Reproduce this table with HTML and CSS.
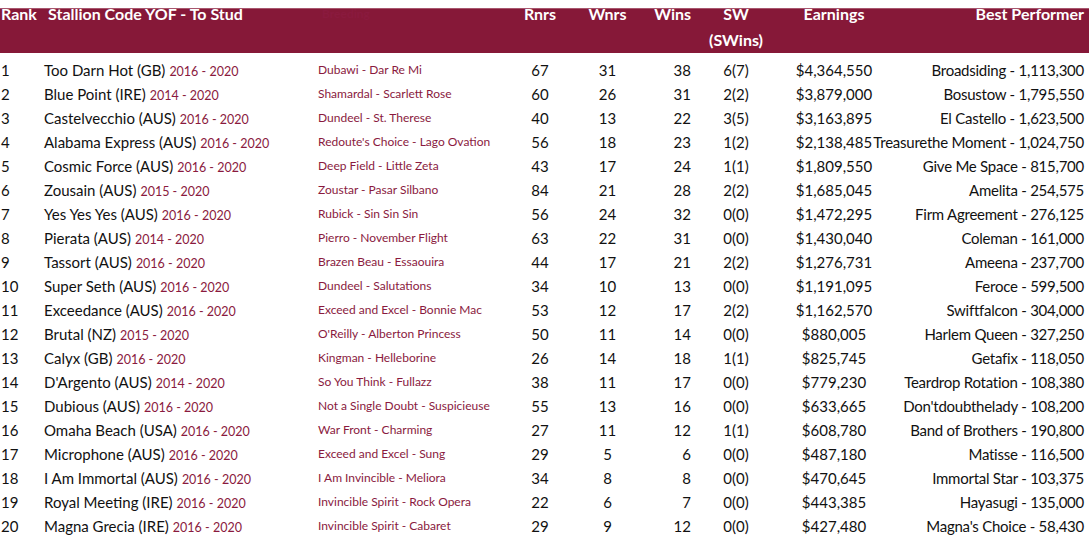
FILE: index.html
```html
<!DOCTYPE html>
<html lang="en">
<head>
<meta charset="utf-8">
<title>Stallion Table</title>
<link rel="stylesheet" href="styles.css">
</head>
<body>
<div class="table">
  <div class="row head">
    <div class="c rank">Rank</div>
    <div class="c stallion pad">Stallion Code YOF - To Stud</div>
    <div class="c breeding pad">Breeding</div>
    <div class="c ctr">Rnrs</div>
    <div class="c ctr">Wnrs</div>
    <div class="c end">Wins</div>
    <div class="c ctr col">SW<br>(SWins)</div>
    <div class="c ctr">Earnings</div>
    <div class="c end">Best Performer</div>
  </div>
  <div class="body">
    <div class="row"><div class="c rank">1</div><div class="c stallion">Too Darn Hot (GB) <span class="yof">2016 - 2020</span></div><div class="c breeding">Dubawi - Dar Re Mi</div><div class="c ctr">67</div><div class="c ctr">31</div><div class="c end">38</div><div class="c ctr">6(7)</div><div class="c ctr">$4,364,550</div><div class="c end best">Broadsiding - 1,113,300</div></div>
    <div class="row"><div class="c rank">2</div><div class="c stallion">Blue Point (IRE) <span class="yof">2014 - 2020</span></div><div class="c breeding">Shamardal - Scarlett Rose</div><div class="c ctr">60</div><div class="c ctr">26</div><div class="c end">31</div><div class="c ctr">2(2)</div><div class="c ctr">$3,879,000</div><div class="c end best">Bosustow - 1,795,550</div></div>
    <div class="row"><div class="c rank">3</div><div class="c stallion">Castelvecchio (AUS) <span class="yof">2016 - 2020</span></div><div class="c breeding">Dundeel - St. Therese</div><div class="c ctr">40</div><div class="c ctr">13</div><div class="c end">22</div><div class="c ctr">3(5)</div><div class="c ctr">$3,163,895</div><div class="c end best">El Castello - 1,623,500</div></div>
    <div class="row"><div class="c rank">4</div><div class="c stallion">Alabama Express (AUS) <span class="yof">2016 - 2020</span></div><div class="c breeding">Redoute's Choice - Lago Ovation</div><div class="c ctr">56</div><div class="c ctr">18</div><div class="c end">23</div><div class="c ctr">1(2)</div><div class="c ctr">$2,138,485</div><div class="c end best">Treasurethe Moment - 1,024,750</div></div>
    <div class="row"><div class="c rank">5</div><div class="c stallion">Cosmic Force (AUS) <span class="yof">2016 - 2020</span></div><div class="c breeding">Deep Field - Little Zeta</div><div class="c ctr">43</div><div class="c ctr">17</div><div class="c end">24</div><div class="c ctr">1(1)</div><div class="c ctr">$1,809,550</div><div class="c end best">Give Me Space - 815,700</div></div>
    <div class="row"><div class="c rank">6</div><div class="c stallion">Zousain (AUS) <span class="yof">2015 - 2020</span></div><div class="c breeding">Zoustar - Pasar Silbano</div><div class="c ctr">84</div><div class="c ctr">21</div><div class="c end">28</div><div class="c ctr">2(2)</div><div class="c ctr">$1,685,045</div><div class="c end best">Amelita - 254,575</div></div>
    <div class="row"><div class="c rank">7</div><div class="c stallion">Yes Yes Yes (AUS) <span class="yof">2016 - 2020</span></div><div class="c breeding">Rubick - Sin Sin Sin</div><div class="c ctr">56</div><div class="c ctr">24</div><div class="c end">32</div><div class="c ctr">0(0)</div><div class="c ctr">$1,472,295</div><div class="c end best">Firm Agreement - 276,125</div></div>
    <div class="row"><div class="c rank">8</div><div class="c stallion">Pierata (AUS) <span class="yof">2014 - 2020</span></div><div class="c breeding">Pierro - November Flight</div><div class="c ctr">63</div><div class="c ctr">22</div><div class="c end">31</div><div class="c ctr">0(0)</div><div class="c ctr">$1,430,040</div><div class="c end best">Coleman - 161,000</div></div>
    <div class="row"><div class="c rank">9</div><div class="c stallion">Tassort (AUS) <span class="yof">2016 - 2020</span></div><div class="c breeding">Brazen Beau - Essaouira</div><div class="c ctr">44</div><div class="c ctr">17</div><div class="c end">21</div><div class="c ctr">2(2)</div><div class="c ctr">$1,276,731</div><div class="c end best">Ameena - 237,700</div></div>
    <div class="row"><div class="c rank">10</div><div class="c stallion">Super Seth (AUS) <span class="yof">2016 - 2020</span></div><div class="c breeding">Dundeel - Salutations</div><div class="c ctr">34</div><div class="c ctr">10</div><div class="c end">13</div><div class="c ctr">0(0)</div><div class="c ctr">$1,191,095</div><div class="c end best">Feroce - 599,500</div></div>
    <div class="row"><div class="c rank">11</div><div class="c stallion">Exceedance (AUS) <span class="yof">2016 - 2020</span></div><div class="c breeding">Exceed and Excel - Bonnie Mac</div><div class="c ctr">53</div><div class="c ctr">12</div><div class="c end">17</div><div class="c ctr">2(2)</div><div class="c ctr">$1,162,570</div><div class="c end best">Swiftfalcon - 304,000</div></div>
    <div class="row"><div class="c rank">12</div><div class="c stallion">Brutal (NZ) <span class="yof">2015 - 2020</span></div><div class="c breeding">O'Reilly - Alberton Princess</div><div class="c ctr">50</div><div class="c ctr">11</div><div class="c end">14</div><div class="c ctr">0(0)</div><div class="c ctr">$880,005</div><div class="c end best">Harlem Queen - 327,250</div></div>
    <div class="row"><div class="c rank">13</div><div class="c stallion">Calyx (GB) <span class="yof">2016 - 2020</span></div><div class="c breeding">Kingman - Helleborine</div><div class="c ctr">26</div><div class="c ctr">14</div><div class="c end">18</div><div class="c ctr">1(1)</div><div class="c ctr">$825,745</div><div class="c end best">Getafix - 118,050</div></div>
    <div class="row"><div class="c rank">14</div><div class="c stallion">D'Argento (AUS) <span class="yof">2014 - 2020</span></div><div class="c breeding">So You Think - Fullazz</div><div class="c ctr">38</div><div class="c ctr">11</div><div class="c end">17</div><div class="c ctr">0(0)</div><div class="c ctr">$779,230</div><div class="c end best">Teardrop Rotation - 108,380</div></div>
    <div class="row"><div class="c rank">15</div><div class="c stallion">Dubious (AUS) <span class="yof">2016 - 2020</span></div><div class="c breeding">Not a Single Doubt - Suspicieuse</div><div class="c ctr">55</div><div class="c ctr">13</div><div class="c end">16</div><div class="c ctr">0(0)</div><div class="c ctr">$633,665</div><div class="c end best">Don'tdoubthelady - 108,200</div></div>
    <div class="row"><div class="c rank">16</div><div class="c stallion">Omaha Beach (USA) <span class="yof">2016 - 2020</span></div><div class="c breeding">War Front - Charming</div><div class="c ctr">27</div><div class="c ctr">11</div><div class="c end">12</div><div class="c ctr">1(1)</div><div class="c ctr">$608,780</div><div class="c end best">Band of Brothers - 190,800</div></div>
    <div class="row"><div class="c rank">17</div><div class="c stallion">Microphone (AUS) <span class="yof">2016 - 2020</span></div><div class="c breeding">Exceed and Excel - Sung</div><div class="c ctr">29</div><div class="c ctr">5</div><div class="c end">6</div><div class="c ctr">0(0)</div><div class="c ctr">$487,180</div><div class="c end best">Matisse - 116,500</div></div>
    <div class="row"><div class="c rank">18</div><div class="c stallion">I Am Immortal (AUS) <span class="yof">2016 - 2020</span></div><div class="c breeding">I Am Invincible - Meliora</div><div class="c ctr">34</div><div class="c ctr">8</div><div class="c end">8</div><div class="c ctr">0(0)</div><div class="c ctr">$470,645</div><div class="c end best">Immortal Star - 103,375</div></div>
    <div class="row"><div class="c rank">19</div><div class="c stallion">Royal Meeting (IRE) <span class="yof">2016 - 2020</span></div><div class="c breeding">Invincible Spirit - Rock Opera</div><div class="c ctr">22</div><div class="c ctr">6</div><div class="c end">7</div><div class="c ctr">0(0)</div><div class="c ctr">$443,385</div><div class="c end best">Hayasugi - 135,000</div></div>
    <div class="row"><div class="c rank">20</div><div class="c stallion">Magna Grecia (IRE) <span class="yof">2016 - 2020</span></div><div class="c breeding">Invincible Spirit - Cabaret</div><div class="c ctr">29</div><div class="c ctr">9</div><div class="c end">12</div><div class="c ctr">0(0)</div><div class="c ctr">$427,480</div><div class="c end best">Magna's Choice - 58,430</div></div>
  </div>
</div>
</body>
</html>
```
FILE: styles.css
```css
html, body {
  margin: 0;
  padding: 0;
  background: #ffffff;
}
body {
  font-family: "Lato", "Liberation Sans", sans-serif;
  color: #111111;
}
.table {
  width: 1089px;
  padding-top: 1px;
}
.row {
  display: grid;
  grid-template-columns: 44px 274px 187px 70px 65px 51px 90px 106px 197px;
  padding-right: 5px;
  height: 24px;
  line-height: 24px;
  font-size: 15px;
}
.c {
  display: flex;
  white-space: nowrap;
  justify-content: flex-start;
  align-items: baseline;
}
.ctr { justify-content: center; }
.end { justify-content: flex-end; }
.rank { padding-left: 1px; }
.best { letter-spacing: -0.25px; }
.head {
  height: 52px;
  line-height: 26px;
  font-size: 16px;
  font-weight: 700;
  color: #ffffff;
  background: linear-gradient(to bottom, transparent 7px, #a8566e 7px, #a8566e 8px, #861838 8px);
}
.head .c { align-items: flex-start; letter-spacing: 0; }
.head .col { text-align: center; display: block; }
.head .pad { padding-left: 4px; }
.body { padding-top: 5px; }
.yof {
  color: #8a1a3e;
  font-size: 12.5px;
  margin-left: 4px;
}
.breeding {
  color: #8a1a3e;
  font-size: 12px;
}
```
